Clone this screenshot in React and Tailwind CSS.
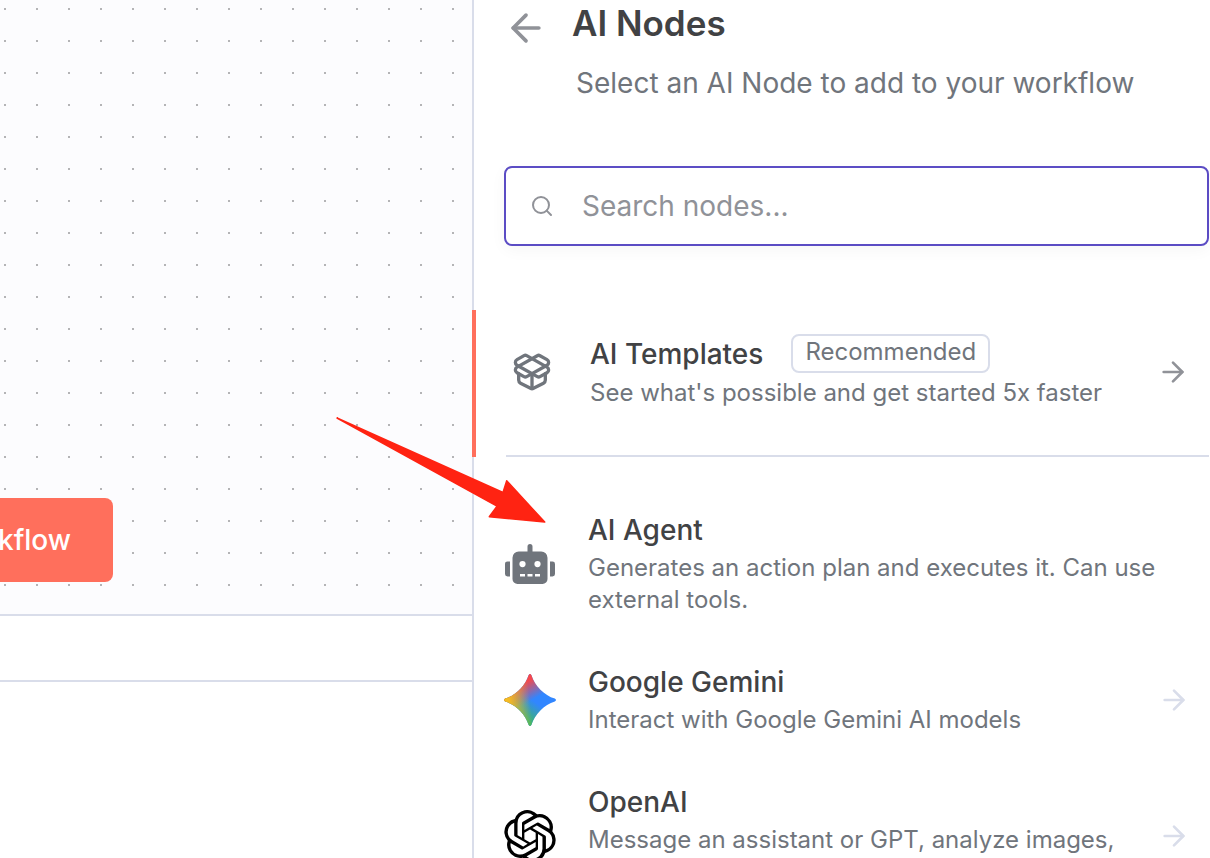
import React, { useState } from 'react';
import { ArrowLeft, ArrowRight, PackageOpen, Search } from 'lucide-react';
import { FaRobot } from 'react-icons/fa';
import { SiOpenai } from 'react-icons/si';

const NODES = [
  {
    name: 'AI Agent',
    description: 'Generates an action plan and executes it. Can use external tools.',
    icon: <FaRobot className="w-[50px] h-10 text-[#70757c]" />,
    hasActions: false,
  },
  {
    name: 'Google Gemini',
    description: 'Interact with Google Gemini AI models',
    icon: <GeminiIcon />,
    hasActions: true,
  },
  {
    name: 'OpenAI',
    description: 'Message an assistant or GPT, analyze images, generate audio, etc.',
    icon: <SiOpenai className="w-[52px] h-[52px] text-black" />,
    hasActions: true,
  },
];

export default function App() {
  return (
    <div className="relative flex h-screen overflow-hidden bg-white font-['Inter',sans-serif] text-[#414244]">
      <Workspace />
      <NodeCreator />
      <PointerArrow />
    </div>
  );
}

function Workspace() {
  return (
    <main className="flex min-w-0 flex-1 flex-col">
      <div className="flex flex-1 items-end bg-[#fcfcfe] bg-[radial-gradient(circle,#b4b4b6_1px,transparent_1px)] bg-[size:32px_32px] bg-[position:-11px_-7px] pb-8">
        <button
          type="button"
          className="flex h-[84px] w-[113px] items-center justify-end overflow-hidden rounded-r-lg bg-[#ff6f5c] pr-[42px] text-[28px] font-medium text-white"
        >
          workflow
        </button>
      </div>
      <div className="h-[68px] border-y-2 border-[#d9ddea]" />
      <div className="h-44" />
    </main>
  );
}

function NodeCreator() {
  const [query, setQuery] = useState('');

  return (
    <aside className="w-[738px] shrink-0 border-l-2 border-[#d9ddea] bg-white">
      <header className="flex gap-6 pl-[30px] pt-px">
        <button type="button" aria-label="Back" className="mt-[5px] h-11 w-11 text-[#909298]">
          <ArrowLeft className="h-11 w-11" />
        </button>
        <div>
          <h1 className="text-[35px] leading-[44px] font-semibold">AI Nodes</h1>
          <p className="mt-4 pl-1 text-[28px] leading-[44px] text-[#70757c]">Select an AI Node to add to your workflow</p>
        </div>
      </header>

      <label className="mt-[61px] mr-px ml-[30px] flex h-20 items-center gap-7 rounded-lg border-2 border-[#5b4cc4] px-6 shadow-[0_4px_16px_rgba(0,0,0,0.04)]">
        <Search className="h-6 w-6 shrink-0 text-[#909298]" />
        <input
          type="text"
          aria-label="Search nodes"
          placeholder="Search nodes..."
          value={query}
          onChange={(e) => setQuery(e.target.value)}
          className="min-w-0 flex-1 text-[28px] outline-none placeholder:text-[#909298]"
        />
      </label>

      <section className="relative mt-16 pr-px pl-8">
        <span className="absolute top-0 bottom-0 -left-0.5 w-1 bg-[#ff6f5c]" />
        <div className="flex items-center border-b-2 border-[#d9ddea] pt-6 pr-5 pb-[46px]">
          <PackageOpen className="mx-1.5 h-10 w-10 shrink-0 text-[#70757c]" />
          <div className="ml-8 flex-1">
            <div className="flex items-center gap-7">
              <h2 className="text-[28px] leading-9 font-medium">AI Templates</h2>
              <span className="rounded-lg border-2 border-[#d9ddea] px-3 pb-[3px] text-2xl leading-8 text-[#70757c]">
                Recommended
              </span>
            </div>
            <p className="mt-1 text-2xl leading-8 text-[#70757c]">See what's possible and get started 5x faster</p>
          </div>
          <ArrowRight className="h-8 w-8 shrink-0 text-[#909298]" />
        </div>
      </section>

      <ul className="mt-[31px] pr-5 pl-[30px]">
        {NODES.map((node) => (
          <NodeRow key={node.name} {...node} />
        ))}
      </ul>
    </aside>
  );
}

function NodeRow({ name, description, icon, hasActions }) {
  return (
    <li className="flex items-center py-6">
      <div className="flex w-[52px] shrink-0 justify-center">{icon}</div>
      <div className="ml-8 flex-1">
        <h3 className="text-[28px] leading-9 font-medium">{name}</h3>
        <p className="mt-1 text-2xl leading-8 text-[#70757c]">{description}</p>
      </div>
      {hasActions && <ArrowRight className="h-8 w-8 shrink-0 text-[#d9ddea]" />}
    </li>
  );
}

function GeminiIcon() {
  const star =
    'M11.4 1.5Q12 .5 12.6 1.5C14 6 18 10 22.5 11.4Q23.5 12 22.5 12.6C18 14 14 18 12.6 22.5Q12 23.5 11.4 22.5C10 18 6 14 1.5 12.6Q.5 12 1.5 11.4C6 10 10 6 11.4 1.5Z';
  return (
    <svg viewBox="1 1 22 22" className="h-[52px] w-[52px]">
      <defs>
        <linearGradient id="gemini-green" gradientUnits="userSpaceOnUse" x1="8" x2="13" y1="19" y2="12">
          <stop stopColor="#3cb866" />
          <stop offset="1" stopColor="#3cb866" stopOpacity="0" />
        </linearGradient>
        <linearGradient id="gemini-red" gradientUnits="userSpaceOnUse" x1="9" x2="13" y1="5" y2="12">
          <stop stopColor="#f5484c" />
          <stop offset="1" stopColor="#f5484c" stopOpacity="0" />
        </linearGradient>
        <linearGradient id="gemini-yellow" gradientUnits="userSpaceOnUse" x1="3" x2="12" y1="13" y2="12">
          <stop stopColor="#f5bc22" />
          <stop offset="1" stopColor="#f5bc22" stopOpacity="0" />
        </linearGradient>
      </defs>
      <path d={star} fill="#3186ff" />
      <path d={star} fill="url(#gemini-green)" />
      <path d={star} fill="url(#gemini-red)" />
      <path d={star} fill="url(#gemini-yellow)" />
    </svg>
  );
}

// Tutorial annotation lying over the canvas and the panel
function PointerArrow() {
  return (
    <svg
      viewBox="0 0 210 106"
      className="pointer-events-none absolute top-[417px] right-[664px] h-[106px] w-[210px]"
      fill="#ff2312"
      stroke="#ff2312"
      strokeWidth="1.5"
      strokeLinejoin="round"
    >
      <path d="M1 1 167 75.5l3.7-11.7 38 41.3-55.4-5.3 7.7-10.6z" />
    </svg>
  );
}
